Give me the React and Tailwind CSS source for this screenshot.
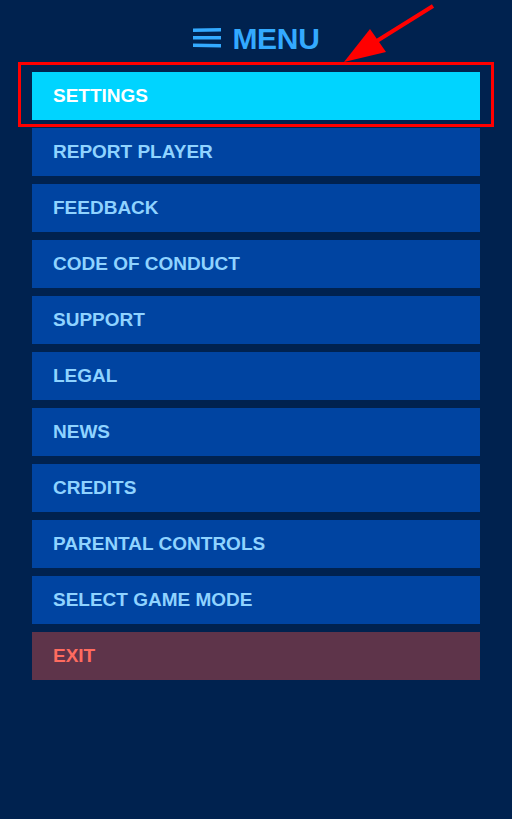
import React from "react";

const items = [
  "REPORT PLAYER",
  "FEEDBACK",
  "CODE OF CONDUCT",
  "SUPPORT",
  "LEGAL",
  "NEWS",
  "CREDITS",
  "PARENTAL CONTROLS",
  "SELECT GAME MODE",
];

const font = { fontFamily: '"Liberation Sans", Arial, sans-serif' };

export default function App() {
  return (
    <div className="relative min-h-screen bg-[#00224f] font-bold" style={font}>
      {/* header */}
      <div className="flex items-center justify-center gap-[10px] pt-[16px] h-[62px]">
        <svg width="30" height="22" viewBox="0 0 30 22">
          <path d="M1 0.5 L29 0 L29 3.5 L1 4 Z" fill="#33aaff" />
          <path d="M1 8 L29 8 L29 11.5 L1 11.5 Z" fill="#33aaff" />
          <path d="M1 15.5 L29 16 L29 19.5 L1 19 Z" fill="#33aaff" />
        </svg>
        <span className="text-[30px] leading-none text-[#33aaff] tracking-[-0.3px]">MENU</span>
      </div>

      {/* list */}
      <div className="flex flex-col gap-2 px-8 pt-[10px]">
        <div className="h-12 flex items-center pl-[21px] bg-[#00d4ff] text-white text-[19px]">
          SETTINGS
        </div>
        {items.map((t) => (
          <div
            key={t}
            className="h-12 flex items-center pl-[21px] bg-[#0044a1] text-[#8fd3ff] text-[19px]"
          >
            {t}
          </div>
        ))}
        <div className="h-12 flex items-center pl-[21px] bg-[#5e344a] text-[#ff6b5f] text-[19px]">
          EXIT
        </div>
      </div>

      {/* annotation */}
      <div className="absolute left-[18px] top-[62px] w-[476px] h-[65px] border-[3px] border-[#ff0000] pointer-events-none" />
      <svg className="absolute left-0 top-0 pointer-events-none" width="512" height="80">
        <line x1="433" y1="6" x2="372" y2="44" stroke="#ff0000" strokeWidth="4" />
        <polygon points="344,62 370,29 386,52" fill="#ff0000" />
      </svg>
    </div>
  );
}
